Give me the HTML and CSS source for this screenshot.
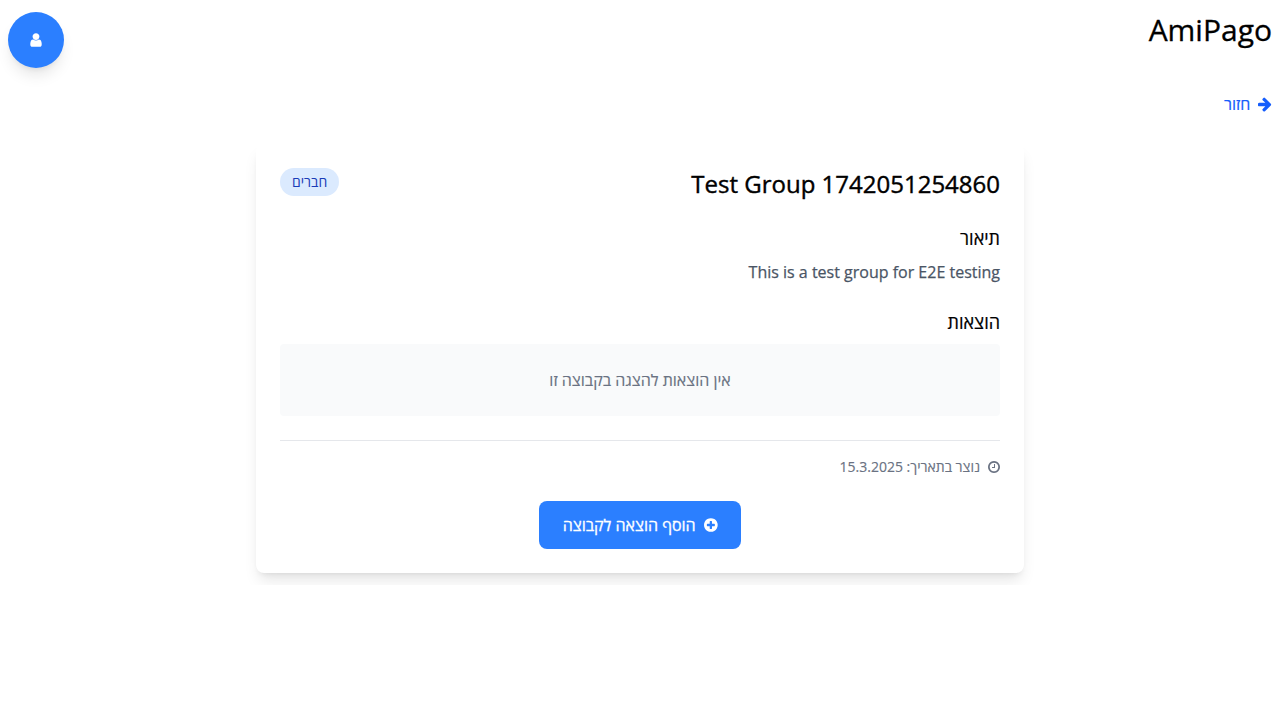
FILE: index.html
```html
<!DOCTYPE html>
<html lang="he" dir="rtl">
<head>
<meta charset="utf-8">
<title>AmiPago</title>
<link rel="stylesheet" href="styles.css">
</head>
<body>
<header class="header">
  <h1 class="brand">AmiPago</h1>
  <button class="avatar" aria-label="פרופיל"><svg class="icon icon-user" viewBox="256 0 1280 1792"><path d="M1536 1399q0 109-62.5 187t-150.5 78h-854q-88 0-150.5-78t-62.5-187q0-85 8.5-160.5t31.5-152 58.5-131 94-89 134.5-34.5q131 128 313 128t313-128q76 0 134.5 34.5t94 89 58.5 131 31.5 152 8.5 160.5zm-256-887q0 159-112.5 271.5t-271.5 112.5-271.5-112.5-112.5-271.5 112.5-271.5 271.5-112.5 271.5 112.5 112.5 271.5z"/></svg></button>
</header>
<a class="back"><svg class="icon" viewBox="128 0 1536 1792"><path d="M1600 960q0 54-37 91l-651 651q-39 37-91 37-51 0-90-37l-75-75q-38-38-38-91t38-91l293-293h-704q-52 0-84.5-37.5t-32.5-90.5v-128q0-53 32.5-90.5t84.5-37.5h704l-293-294q-38-36-38-90t38-90l75-75q38-38 90-38 53 0 91 38l651 651q37 35 37 90z"/></svg><span>חזור</span></a>
<main class="card">
  <div class="card-head">
    <h2 class="title">Test Group 1742051254860</h2>
    <span class="badge">חברים</span>
  </div>
  <section class="section">
    <h3 class="section-title">תיאור</h3>
    <p class="description">This is a test group for E2E testing</p>
  </section>
  <section class="section">
    <h3 class="section-title">הוצאות</h3>
    <div class="empty">אין הוצאות להצגה בקבוצה זו</div>
  </section>
  <div class="created"><svg class="icon icon-small" viewBox="128 0 1536 1792"><path d="M1024 544v448q0 14-9 23t-23 9h-320q-14 0-23-9t-9-23v-64q0-14 9-23t23-9h224v-352q0-14 9-23t23-9h64q14 0 23 9t9 23zm416 352q0-148-73-273t-198-198-273-73-273 73-198 198-73 273 73 273 198 198 273 73 273-73 198-198 73-273zm224 0q0 209-103 385.5t-279.5 279.5-385.5 103-385.5-103-279.5-279.5-103-385.5 103-385.5 279.5-279.5 385.5-103 385.5 103 279.5 279.5 103 385.5z"/></svg><span>נוצר בתאריך: 15.3.2025</span></div>
  <div class="actions">
    <button class="add"><svg class="icon" viewBox="128 0 1536 1792"><path d="M1344 960v-128q0-26-19-45t-45-19h-256v-256q0-26-19-45t-45-19h-128q-26 0-45 19t-19 45v256h-256q-26 0-45 19t-19 45v128q0 26 19 45t45 19h256v256q0 26 19 45t45 19h128q26 0 45-19t19-45v-256h256q26 0 45-19t19-45zm320-64q0 209-103 385.5t-279.5 279.5-385.5 103-385.5-103-279.5-279.5-103-385.5 103-385.5 279.5-279.5 385.5-103 385.5 103 279.5 279.5 103 385.5z"/></svg><span class="add-label">הוסף הוצאה לקבוצה</span></button>
  </div>
</main>
</body>
</html>
```
FILE: styles.css
```css
* { box-sizing: border-box; margin: 0; }
body {
  padding: 12px 8px;
  background: #fff;
  color: #000;
  font-family: "Open Sans", "Noto Sans", sans-serif;
  font-size: 16px;
  line-height: 24px;
}
button { border: 0; font: inherit; color: #fff; background: #2b7fff; }
.icon { width: 13.71px; height: 16px; flex: none; fill: currentColor; overflow: visible; }
.icon-user { width: 12px; }
.icon-small { width: 12px; height: 14px; }
.header { display: flex; justify-content: space-between; align-items: flex-start; height: 80px; }
.brand { font-size: 30px; line-height: 36px; font-weight: 400; -webkit-text-stroke: .3px; }
.avatar {
  display: flex;
  align-items: center;
  justify-content: center;
  width: 56px;
  height: 56px;
  padding: 0;
  border-radius: 50%;
  box-shadow: 0 10px 15px -3px rgba(0,0,0,.1), 0 4px 6px -4px rgba(0,0,0,.1);
}
.back { display: flex; align-items: center; gap: 8px; color: #155dfc; -webkit-text-stroke: .2px; }
.card {
  width: 768px;
  margin: 28px auto 0;
  padding: 24px;
  border-radius: 8px;
  background: #fff;
  box-shadow: 0 10px 15px -3px rgba(0,0,0,.1), 0 4px 6px -4px rgba(0,0,0,.1);
}
.card-head { display: flex; justify-content: space-between; align-items: flex-start; margin-bottom: 24px; }
.title { font-size: 24px; line-height: 32px; font-weight: 400; -webkit-text-stroke: .4px; }
.badge {
  padding: 4px 12px;
  border-radius: 14px;
  background: #dbeafe;
  color: #193cb8;
  font-size: 14px;
  line-height: 20px;
}
.section { margin-bottom: 24px; }
.section-title { margin-bottom: 8px; font-size: 18px; line-height: 28px; font-weight: 400; -webkit-text-stroke: .2px; }
.description { color: #4a5565; -webkit-text-stroke: .25px; }
.empty { padding: 24px; border-radius: 4px; background: #f9fafb; color: #6a7282; text-align: center; -webkit-text-stroke: .15px; }
.created {
  display: flex;
  align-items: center;
  gap: 8px;
  padding-top: 16px;
  border-top: 1px solid #e5e7eb;
  color: #6a7282;
  font-size: 14px;
  line-height: 20px;
  -webkit-text-stroke: .15px;
}
.actions { display: flex; justify-content: center; margin-top: 24px; }
.add { display: flex; align-items: center; gap: 8px; padding: 12px 24px; border-radius: 8px; }
.add-label { -webkit-text-stroke: .3px; }
```
